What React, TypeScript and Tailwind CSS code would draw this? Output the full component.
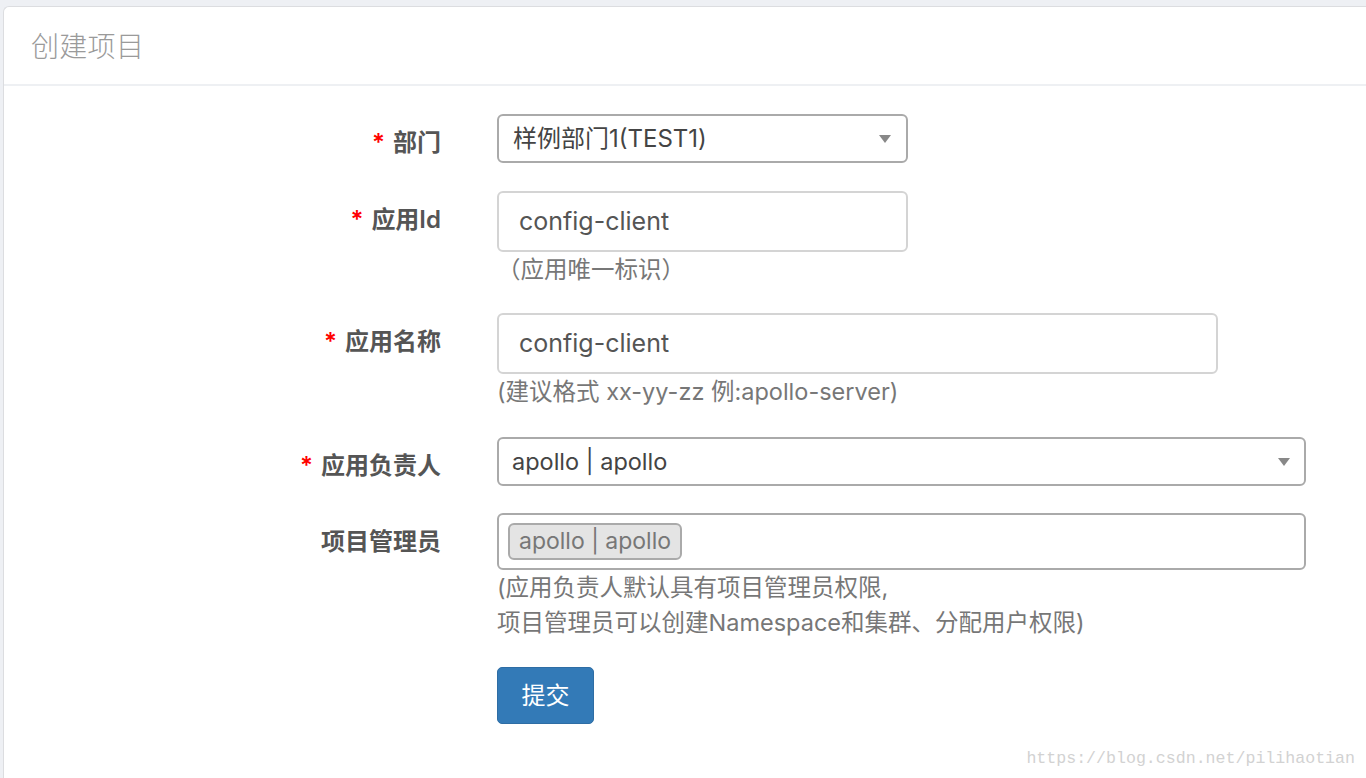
import React from 'react';

const font = "font-['Inter','Noto_Sans_CJK_SC',sans-serif]";

const Caret: React.FC = () => (
    <svg width="12" height="8" viewBox="0 0 12 8" className="shrink-0">
        <path d="M0 0h12L6 8z" fill="#888" />
    </svg>
);

const Label: React.FC<{ text: string; required?: boolean }> = ({ text, required }) => (
    <div className="w-[437px] shrink-0 pt-[11px] text-right text-[24px] leading-[35px] font-semibold text-[#555]">
        {required && <span className="text-[#ff0000] mr-[8px]">*</span>}
        {text}
    </div>
);

const Help: React.FC<{ children: React.ReactNode }> = ({ children }) => (
    <div className="text-[23.5px] leading-[35px] text-[#777]">{children}</div>
);

const App: React.FC = () => {
    return (
        <div className={`relative h-[778px] overflow-hidden bg-[#eef0f4] pt-[6px] pl-[3px] ${font}`}>
            <div className="h-full bg-white border-l border-t border-[#dcdde0] rounded-tl-[6px]">
                {/* Header */}
                <div className="h-[79px] flex items-center pt-[3px] px-[27px] border-b-2 border-[#eef0f3]">
                    <h3 className="text-[28px] font-light text-[#9a9a9a] tracking-[0.3px]">创建项目</h3>
                </div>

                {/* Form */}
                <div className="pt-[28px]">
                    {/* 部门 */}
                    <div className="flex gap-[56px] mb-[28px]">
                        <Label text="部门" required />
                        <div className="w-[411px] h-[49px] flex items-center justify-between pl-[14px] pr-[15px] border-2 border-[#aaa] rounded-[6px] text-[24px] text-[#444]">
                            <span>样例部门1(TEST1)</span>
                            <Caret />
                        </div>
                    </div>

                    {/* 应用Id */}
                    <div className="flex gap-[56px] mb-[26px]">
                        <Label text="应用Id" required />
                        <div>
                            <div className="w-[411px] h-[61px] flex items-center pl-[20px] border-2 border-[#d4d4d4] rounded-[6px] text-[25px] text-[#555]">
                                config-client
                            </div>
                            <Help>（应用唯一标识）</Help>
                        </div>
                    </div>

                    {/* 应用名称 */}
                    <div className="flex gap-[56px] mb-[28px]">
                        <Label text="应用名称" required />
                        <div>
                            <div className="w-[721px] h-[61px] flex items-center pl-[20px] border-2 border-[#d4d4d4] rounded-[6px] text-[25px] text-[#555]">
                                config-client
                            </div>
                            <Help>(建议格式 xx-yy-zz 例:apollo-server)</Help>
                        </div>
                    </div>

                    {/* 应用负责人 */}
                    <div className="flex gap-[56px] mb-[27px]">
                        <Label text="应用负责人" required />
                        <div className="w-[809px] h-[49px] flex items-center justify-between pl-[13px] pr-[14px] border-2 border-[#aaa] rounded-[6px] text-[23.5px] text-[#444]">
                            <span>apollo | apollo</span>
                            <Caret />
                        </div>
                    </div>

                    {/* 项目管理员 */}
                    <div className="flex gap-[56px] mb-[27px]">
                        <Label text="项目管理员" />
                        <div>
                            <div className="w-[809px] h-[57px] flex items-center pl-[9px] border-2 border-[#aaa] rounded-[6px]">
                                <span className="h-[37px] flex items-center px-[9px] bg-[#e4e4e4] border-2 border-[#aaa] rounded-[6px] text-[23px] text-[#777]">
                                    apollo | apollo
                                </span>
                            </div>
                            <Help>
                                (应用负责人默认具有项目管理员权限,
                                <br />
                                项目管理员可以创建Namespace和集群、分配用户权限)
                            </Help>
                        </div>
                    </div>

                    {/* Submit */}
                    <div className="flex gap-[56px]">
                        <div className="w-[437px] shrink-0" />
                        <button className="w-[97px] h-[57px] bg-[#337ab7] border border-[#2e6da4] rounded-[5px] text-[24px] text-white">
                            提交
                        </button>
                    </div>
                </div>
            </div>

            {/* Watermark */}
            <div className="absolute right-[11px] bottom-[6px] font-['Liberation_Mono',monospace] text-[16.6px] text-[#d2d2d2]">
                https://blog.csdn.net/pilihaotian
            </div>
        </div>
    );
};

export default App;
